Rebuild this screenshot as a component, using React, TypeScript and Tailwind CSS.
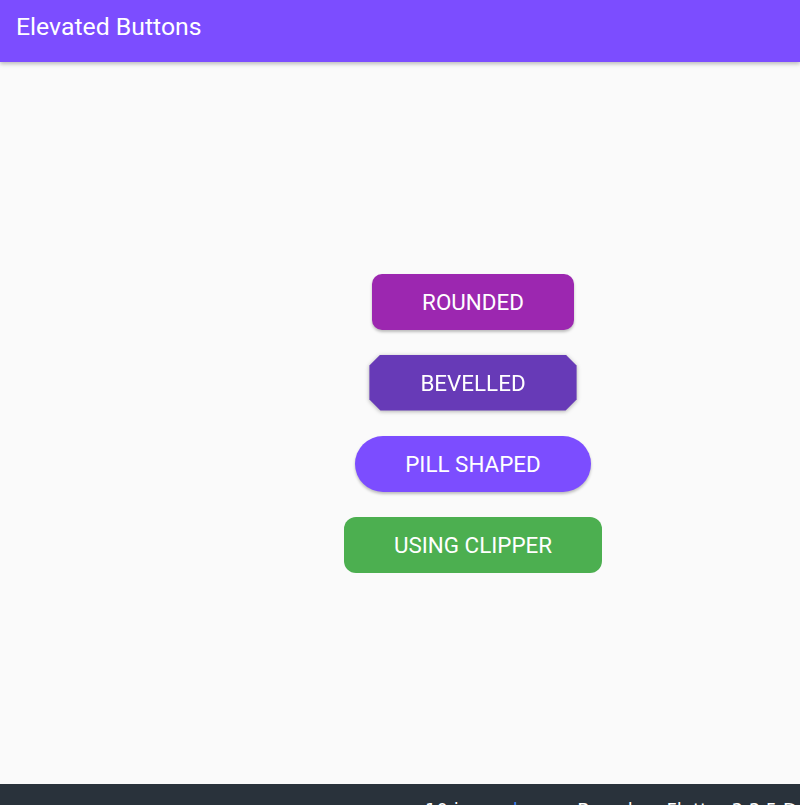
export default function App() {
  const bevel =
    "[clip-path:polygon(11px_0,calc(100%-11px)_0,100%_11px,100%_calc(100%-11px),calc(100%-11px)_100%,11px_100%,0_calc(100%-11px),0_11px)]";

  return (
    <div className="h-[805px] w-[800px] overflow-hidden bg-[#fafafa] flex flex-col font-['Roboto',sans-serif]">
      <header className="h-[62px] shrink-0 bg-[#7c4dff] flex items-center px-4 shadow-[0_2px_4px_rgba(0,0,0,0.25)] relative z-10">
        <h1 className="text-white text-[24.8px] leading-none -mt-[8px]">Elevated Buttons</h1>
      </header>

      <main className="flex-1 w-[946px] flex flex-col items-center justify-center gap-[25px]">
        <button className="h-14 px-[50px] pt-[2px] rounded-[10px] bg-[#9c27b0] text-white text-[22.4px] shadow-[0_2px_3px_rgba(0,0,0,0.25)]">
          ROUNDED
        </button>
        <div className="drop-shadow-[0_1px_2px_rgba(0,0,0,0.3)]">
          <button className={`h-14 px-[51px] pt-[2px] bg-[#673ab7] text-white text-[22.4px] ${bevel}`}>
            BEVELLED
          </button>
        </div>
        <button className="h-14 px-[50px] pt-[2px] rounded-full bg-[#7c4dff] text-white text-[22.4px] shadow-[0_2px_3px_rgba(0,0,0,0.25)]">
          PILL SHAPED
        </button>
        <button className="h-14 px-[50px] pt-[2px] rounded-[12px] bg-[#4caf50] text-white text-[22.4px]">
          USING CLIPPER
        </button>
      </main>

      <footer className="h-[21px] shrink-0 bg-[#29323b] flex items-start pl-[425px] pt-[17px] overflow-hidden whitespace-nowrap text-white text-[18px] leading-none font-['DejaVu_Sans',sans-serif]">
        <span>10 issues</span>
        <span className="ml-[3px] text-[#3b82f6]">|</span>
        <span className="ml-[59px]">Based on Flutter 3.3.5 Dart 2.18.2</span>
      </footer>
    </div>
  );
}
